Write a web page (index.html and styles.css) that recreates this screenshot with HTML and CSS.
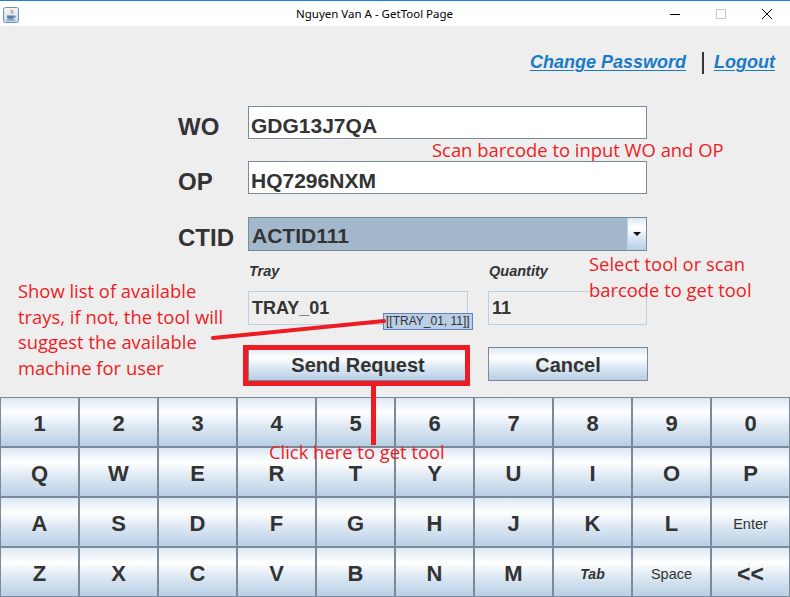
FILE: index.html
```html
<!DOCTYPE html>
<html lang="en">
<head>
<meta charset="utf-8">
<title>Nguyen Van A - GetTool Page</title>
<link rel="stylesheet" href="styles.css">
</head>
<body>
<div class="window">
  <header class="titlebar">
    <span class="app-icon">
      <svg width="16" height="16" viewBox="0 0 16 16">
        <defs>
          <linearGradient id="ig" x1="0" y1="0" x2="0" y2="1">
            <stop offset="0" stop-color="#f4f8fc"/>
            <stop offset="1" stop-color="#c9d9ea"/>
          </linearGradient>
        </defs>
        <rect x="0.5" y="0.5" width="15" height="15" rx="2" fill="url(#ig)" stroke="#6f8fb3"/>
        <path d="M8.5 2.5c-1.5 1.5 1 2-0.5 4M10 3.5c-1 1 0.5 1.5-0.5 3" fill="none" stroke="#e0762a" stroke-width="1"/>
        <path d="M4 8.5h7v1.5c0 1.5-1.5 2-3.5 2S4 11.5 4 10z" fill="#5a7ea8"/>
        <path d="M11 9h1.3v1.3h-1.3" fill="none" stroke="#5a7ea8" stroke-width="0.8"/>
        <path d="M3.5 13h8.5" stroke="#5a7ea8" stroke-width="1"/>
      </svg>
    </span>
    <span class="title">Nguyen Van A - GetTool Page</span>
    <div class="controls">
      <span class="ctl">
        <svg width="10" height="10" viewBox="0 0 10 10"><path d="M0 5.5h10" stroke="#000" stroke-width="1"/></svg>
      </span>
      <span class="ctl">
        <svg width="10" height="10" viewBox="0 0 10 10"><rect x="0.5" y="0.5" width="9" height="9" fill="none" stroke="#c8c8c8" stroke-width="1"/></svg>
      </span>
      <span class="ctl">
        <svg width="10" height="10" viewBox="0 0 10 10"><path d="M0 0L10 10M10 0L0 10" stroke="#000" stroke-width="1"/></svg>
      </span>
    </div>
  </header>

  <main class="content">
    <nav class="links">
      <a class="link" href="#">Change Password</a>
      <span class="sep"></span>
      <a class="link" href="#">Logout</a>
    </nav>

    <section class="form">
      <div class="row">
        <span class="lbl">WO</span>
        <div class="field">GDG13J7QA</div>
      </div>
      <div class="row row-op">
        <span class="lbl">OP</span>
        <div class="field">HQ7296NXM</div>
      </div>
      <div class="row row-ctid">
        <span class="lbl">CTID</span>
        <div class="combo">
          <span class="combo-value">ACTID111</span>
          <span class="combo-arrow"><span class="tri"></span></span>
        </div>
      </div>

      <div class="sub">
        <div class="col col-tray">
          <span class="sublbl">Tray</span>
          <div class="field field-dis">TRAY_01</div>
        </div>
        <div class="col col-qty">
          <span class="sublbl">Quantity</span>
          <div class="field field-dis">11</div>
        </div>
      </div>

      <div class="actions">
        <button class="btn btn-send">Send Request</button>
        <button class="btn btn-cancel">Cancel</button>
      </div>
    </section>

    <section class="keyboard">
      <button class="key">1</button><button class="key">2</button><button class="key">3</button><button class="key">4</button><button class="key">5</button><button class="key">6</button><button class="key">7</button><button class="key">8</button><button class="key">9</button><button class="key">0</button>
      <button class="key">Q</button><button class="key">W</button><button class="key">E</button><button class="key">R</button><button class="key">T</button><button class="key">Y</button><button class="key">U</button><button class="key">I</button><button class="key">O</button><button class="key">P</button>
      <button class="key">A</button><button class="key">S</button><button class="key">D</button><button class="key">F</button><button class="key">G</button><button class="key">H</button><button class="key">J</button><button class="key">K</button><button class="key">L</button><button class="key key-small">Enter</button>
      <button class="key">Z</button><button class="key">X</button><button class="key">C</button><button class="key">V</button><button class="key">B</button><button class="key">N</button><button class="key">M</button><button class="key key-tab">Tab</button><button class="key key-small">Space</button><button class="key key-back">&lt;&lt;</button>
    </section>
  </main>

  <div class="overlay">
    <div class="tooltip">[[TRAY_01, 11]]</div>
    <svg class="marks" width="790" height="597" viewBox="0 0 790 597">
      <line x1="213" y1="338" x2="384" y2="321" stroke="#ed1c24" stroke-width="4" stroke-linecap="round"/>
      <rect x="245.5" y="347.5" width="222" height="36" fill="none" stroke="#ed1c24" stroke-width="5"/>
      <rect x="371" y="386" width="5" height="59" fill="#ed1c24"/>
    </svg>
    <p class="note note-scan">Scan barcode to input WO and OP</p>
    <p class="note note-select">Select tool or scan<br>barcode to get tool</p>
    <p class="note note-list">Show list of available<br>trays, if not, the tool will<br>suggest the available<br>machine for user</p>
    <p class="note note-click">Click here to get tool</p>
  </div>
</div>
</body>
</html>
```

FILE: styles.css
```css
* { box-sizing: border-box; }

html, body {
  margin: 0;
  padding: 0;
}

body {
  width: 790px;
  height: 597px;
  overflow: hidden;
  background: #eeeeee;
  font-family: "Liberation Sans", Arial, sans-serif;
  color: #333333;
}

.window {
  position: relative;
  width: 790px;
  height: 597px;
  display: flex;
  flex-direction: column;
}

/* ---------- title bar ---------- */
.titlebar {
  flex: none;
  height: 26px;
  background: #ffffff;
  border-top: 1px solid #1883d7;
  display: flex;
  align-items: center;
}

.app-icon {
  display: flex;
  width: 16px;
  height: 16px;
  margin-left: 3px;
  margin-top: 2px;
}

.title {
  margin-left: 277px;
  font-family: "Noto Sans", "Open Sans", sans-serif;
  font-size: 11.5px;
  color: #000000;
  white-space: nowrap;
}

.controls {
  margin-left: auto;
  display: flex;
  height: 100%;
}

.ctl {
  width: 46px;
  display: flex;
  align-items: center;
  justify-content: center;
}

/* ---------- content ---------- */
.content {
  flex: 1;
  display: flex;
  flex-direction: column;
  padding-top: 25px;
}

.links {
  display: flex;
  justify-content: flex-end;
  align-items: center;
  height: 22px;
  padding-right: 15px;
}

.link {
  font-size: 18px;
  font-weight: bold;
  font-style: italic;
  color: #1a7bc6;
  text-decoration: underline;
  text-decoration-thickness: 1px;
  text-underline-offset: 2px;
}

.sep {
  display: inline-block;
  width: 2px;
  height: 22px;
  background: #3c3530;
  margin: 1px 10px 0 16px;
}

.form {
  display: flex;
  flex-direction: column;
  padding-left: 178px;
  margin-top: 33px;
}

.row {
  display: flex;
  align-items: flex-start;
  height: 33px;
}

.row-op { margin-top: 22px; }
.row-ctid { margin-top: 23px; height: 34px; }

.lbl {
  width: 70px;
  font-size: 24px;
  font-weight: bold;
  line-height: 33px;
  padding-top: 4px;
}

.field {
  width: 399px;
  height: 33px;
  background: #ffffff;
  border: 1px solid #7a8a99;
  padding: 4px 2px 0;
  font-size: 21px;
  font-weight: bold;
  line-height: 29px;
  white-space: nowrap;
}

.combo {
  width: 399px;
  height: 34px;
  border: 1px solid #7a8a99;
  display: flex;
}

.combo-value {
  flex: 1;
  background: #a3b8cc;
  padding: 3px 3px 0;
  font-size: 21px;
  font-weight: bold;
  line-height: 29px;
}

.combo-arrow {
  width: 19px;
  border-left: 1px solid #c3cfdb;
  background: linear-gradient(to bottom, #dde8f3 0%, #ffffff 30%, #dde8f3 60%, #b8cfe5 100%);
  display: flex;
  align-items: center;
  justify-content: center;
}

.tri {
  width: 0;
  height: 0;
  border-left: 4.5px solid transparent;
  border-right: 4.5px solid transparent;
  border-top: 4.5px solid #111111;
}

.sub {
  display: flex;
  gap: 20px;
  margin-left: 70px;
  margin-top: 11px;
}

.col {
  display: flex;
  flex-direction: column;
}

.sublbl {
  font-size: 14.5px;
  font-weight: bold;
  font-style: italic;
  line-height: 18px;
  padding-left: 1px;
  margin-bottom: 11px;
}

.field-dis {
  height: 34px;
  background: #eeeeee;
  border: 1px solid #b8cfe5;
  padding: 0 3px;
  font-size: 18px;
  line-height: 32px;
}

.col-tray .field-dis { width: 220px; }
.col-qty .field-dis { width: 159px; }

.actions {
  display: flex;
  gap: 20px;
  margin-left: 70px;
  margin-top: 22px;
}

.btn {
  margin: 0;
  height: 34px;
  border: 1px solid #7a8a99;
  background: linear-gradient(to bottom, #dde8f3 0%, #ffffff 30%, #dde8f3 60%, #b8cfe5 100%);
  font-family: "Liberation Sans", Arial, sans-serif;
  font-size: 20px;
  font-weight: bold;
  color: #333333;
  padding: 2px 0 0;
}

.btn-send { width: 220px; }
.btn-cancel { width: 160px; }

/* ---------- keyboard ---------- */
.keyboard {
  margin-top: 16px;
  display: grid;
  grid-template-columns: repeat(10, 79px);
  grid-template-rows: repeat(4, 50px);
}

.key {
  margin: 0;
  border: 1px solid #7a8a99;
  background: linear-gradient(to bottom, #dde8f3 0%, #ffffff 30%, #dde8f3 60%, #b8cfe5 100%);
  font-family: "Liberation Sans", Arial, sans-serif;
  font-size: 22px;
  font-weight: bold;
  color: #333333;
  padding: 4px 0 0;
}

.key-small {
  font-size: 14.5px;
  font-weight: normal;
}

.key-tab {
  font-size: 14px;
  font-style: italic;
}

.key-back {
  font-size: 23px;
}

/* ---------- annotation overlay ---------- */
.overlay {
  position: absolute;
  inset: 0;
  pointer-events: none;
}

.marks {
  position: absolute;
  left: 0;
  top: 0;
}

.tooltip {
  position: absolute;
  left: 383px;
  top: 313px;
  width: 90px;
  height: 17px;
  background: #b8cfe5;
  border: 1px solid #6382bf;
  font-size: 12px;
  line-height: 15px;
  padding-left: 2px;
  color: #333333;
  white-space: nowrap;
}

.note {
  position: absolute;
  margin: 0;
  color: #ed1c24;
  font-family: "Open Sans", "Noto Sans", sans-serif;
  font-size: 18.4px;
  line-height: 26px;
  white-space: nowrap;
}

.note-scan { left: 432px; top: 137px; }
.note-select { left: 589px; top: 251px; }
.note-list { left: 18px; top: 278px; line-height: 25.7px; }
.note-click { left: 269px; top: 439px; }
```
